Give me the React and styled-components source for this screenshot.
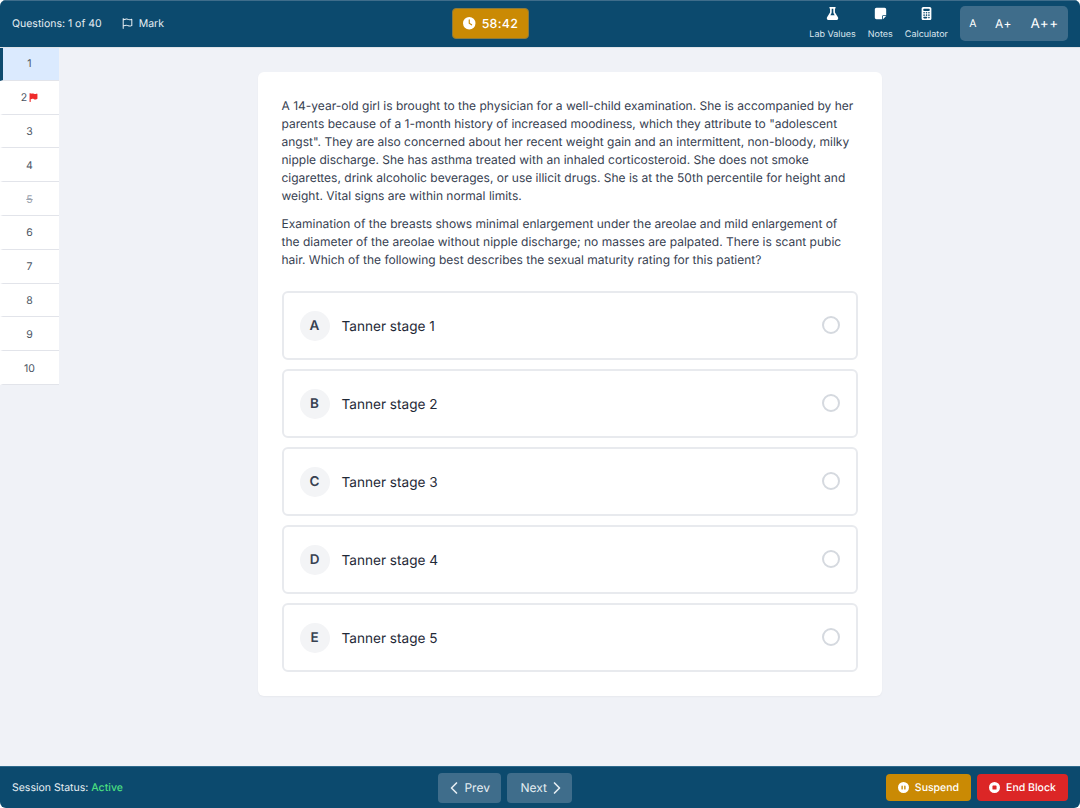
import React from "react";
import styled, { createGlobalStyle } from "styled-components";
import { FaFlask, FaNoteSticky, FaCalculator, FaClock, FaCirclePause, FaCircleStop, FaFlag, FaRegFlag } from "react-icons/fa6";
import { ChevronLeft, ChevronRight } from "lucide-react";

const Global = createGlobalStyle`
  html, body { margin: 0; padding: 0; background: #fff; }
  * { box-sizing: border-box; }
  body { font-family: Inter, "Liberation Sans", sans-serif; text-rendering: geometricPrecision; }
`;
const Shell = styled.div`
  width: 1080px; height: 808px; display: flex; flex-direction: column;
  background: #f0f2f7; border-radius: 6px; overflow: hidden;
`;
const Header = styled.header`
  height: 47px; flex: none; background: #0c4a6e; color: #fff; position: relative; z-index: 1;
  border-top: 1px solid #3f6d8b; box-shadow: 0 1px 0 #dfe3e8;
  display: flex; justify-content: space-between; align-items: center; padding: 0 12px 1px;
`;
const HeaderLeft = styled.div`display: flex; align-items: center; gap: 20px; font-size: 10.5px; color: #e5edf2;`;
const MarkLink = styled.div`display: flex; align-items: center; gap: 6px; padding-right: 8px;
  svg { width: 11px; height: 11px; }`;
const Timer = styled.div`
  height: 31px; width: 77px; background: #ca8a04; border: 1px solid #8a7a3f; border-radius: 4px;
  display: flex; align-items: center; justify-content: center; gap: 6px;
  font-size: 12.4px; font-weight: 500; letter-spacing: .3px; color: #fff;
  svg { width: 12.5px; height: 12.5px; }
`;
const HeaderRight = styled.div`display: flex; align-items: center; gap: 12px;`;
const Tool = styled.div`
  display: flex; flex-direction: column; align-items: center; gap: 9px; font-size: 9px; color: #dbe6ee;
  svg { width: 13px; height: 13px; color: #fff; }
`;
const SizeGroup = styled.div`
  display: flex; align-items: center; height: 35px; background: #3f6d8b; border-radius: 5px; color: #fff;
`;
const SizeBtn = styled.div`
  width: ${p => p.$w}px; height: 100%; display: flex; align-items: center; justify-content: center;
  font-size: ${p => p.$fs}px; position: relative; letter-spacing: .5px;
  & + &::before { content: ""; position: absolute; left: 0; top: 3px; bottom: 3px; width: 1px; background: #5b84a0; }
`;
const Body = styled.div`flex: 1; display: flex; min-height: 0;`;
const Sidebar = styled.nav`width: 59px; flex: none; display: flex; flex-direction: column;`;
const NavItem = styled.div`
  height: 33.8px; display: flex; align-items: center; justify-content: center; gap: 2px;
  font-size: 10.5px; background: ${p => p.$active ? "#dbeafe" : "#fff"};
  color: ${p => p.$struck ? "#9ca3af" : "#4b5563"};
  text-decoration: ${p => p.$struck ? "line-through" : "none"};
  border-bottom: 1px solid #e2e4ea;
  border-left: 3px solid ${p => p.$active ? "#0c4a6e" : "transparent"};
  padding: 1px 3px 0 0;
  svg { width: 9px; height: 9px; color: #ef2b2b; }
`;
const Main = styled.main`flex: 1; display: flex; justify-content: center; align-items: flex-start; padding-top: 25px;`;
const Card = styled.section`
  width: 624px; height: 624px; background: #fff; border-radius: 6px; padding: 24.5px 24px 24px;
  box-shadow: 0 1px 2px rgba(0,0,0,.04);
`;
const Para = styled.p`margin: 0 0 10.75px; font-size: 12px; line-height: 18px; color: #374151;`;
const Options = styled.div`display: flex; flex-direction: column; gap: 9px; margin-top: 22px;`;
const Option = styled.div`
  height: 69px; border: 2px solid #e8eaee; border-radius: 6px; background: #fff;
  display: flex; align-items: center; padding: 0 16px;
`;
const Letter = styled.div`
  width: 30px; height: 30px; border-radius: 50%; background: #f3f4f6; color: #374151;
  display: flex; align-items: center; justify-content: center; font-size: 13.5px; font-weight: 600;
`;
const OptionText = styled.div`flex: 1; margin-left: 12px; padding-top: 2px; font-size: 13.6px; color: #1f2937;`;
const Radio = styled.div`width: 18px; height: 18px; margin-top: -1px; border-radius: 50%; border: 2px solid #d5d9df;`;
const Footer = styled.footer`
  height: 42px; flex: none; background: #0c4a6e; border-top: 1px solid #2f6a8c;
  display: flex; justify-content: space-between; align-items: center; padding: 0 12px;
`;
const Status = styled.div`font-size: 10.5px; color: #e5edf2; span { color: #4ade80; font-weight: 500; }`;
const Nav = styled.div`display: flex; gap: 6px; margin-left: 2px;`;
const NavBtn = styled.div`
  height: 30px; width: ${p => p.$w}px; background: #3f6d8b; border-radius: 4px; color: #e5edf2;
  display: flex; align-items: center; padding-left: ${p => p.$pl}px; font-size: 12px;
  svg { width: 20px; height: 20px; flex: none; }
`;
const Actions = styled.div`display: flex; gap: 6px;`;
const ActionBtn = styled.div`
  height: 27.75px; width: ${p => p.$w}px; border-radius: 4px; background: ${p => p.$bg}; color: #fff;
  display: flex; align-items: center; justify-content: center; gap: 6px; font-size: 10.5px; font-weight: 500;
  svg { width: 11px; height: 11px; }
`;

const nav = [1,2,3,4,5,6,7,8,9,10];
const opts = ["A","B","C","D","E"];

export default function App() {
  return (
    <>
      <Global />
      <Shell>
        <Header>
          <HeaderLeft>
            <span>Questions: 1 of 40</span>
            <MarkLink><FaRegFlag /> Mark</MarkLink>
          </HeaderLeft>
          <Timer><FaClock /> 58:42</Timer>
          <HeaderRight>
            <Tool><FaFlask />Lab Values</Tool>
            <Tool><FaNoteSticky />Notes</Tool>
            <Tool><FaCalculator />Calculator</Tool>
            <SizeGroup>
              <SizeBtn $w={26} $fs={10.5}>A</SizeBtn>
              <SizeBtn $w={35} $fs={12}>A+</SizeBtn>
              <SizeBtn $w={47} $fs={13.5}>A++</SizeBtn>
            </SizeGroup>
          </HeaderRight>
        </Header>
        <Body>
          <Sidebar>
            {nav.map(n => (
              <NavItem key={n} $active={n === 1} $struck={n === 5}>
                {n}{n === 2 && <FaFlag />}
              </NavItem>
            ))}
          </Sidebar>
          <Main>
            <Card>
              <Para>A 14-year-old girl is brought to the physician for a well-child examination. She is accompanied by her parents because of a 1-month history of increased moodiness, which they attribute to "adolescent angst". They are also concerned about her recent weight gain and an intermittent, non-bloody, milky nipple discharge. She has asthma treated with an inhaled corticosteroid. She does not smoke cigarettes, drink alcoholic beverages, or use illicit drugs. She is at the 50th percentile for height and weight. Vital signs are within normal limits.</Para>
              <Para>Examination of the breasts shows minimal enlargement under the areolae and mild enlargement of the diameter of the areolae without nipple discharge; no masses are palpated. There is scant pubic hair. Which of the following best describes the sexual maturity rating for this patient?</Para>
              <Options>
                {opts.map((l, i) => (
                  <Option key={l}>
                    <Letter>{l}</Letter>
                    <OptionText>Tanner stage {i + 1}</OptionText>
                    <Radio />
                  </Option>
                ))}
              </Options>
            </Card>
          </Main>
        </Body>
        <Footer>
          <Status>Session Status: <span>Active</span></Status>
          <Nav>
            <NavBtn $w={63} $pl={6}><ChevronLeft />Prev</NavBtn>
            <NavBtn $w={65} $pl={13}>Next<ChevronRight /></NavBtn>
          </Nav>
          <Actions>
            <ActionBtn $w={85} $bg="#ca8a04"><FaCirclePause />Suspend</ActionBtn>
            <ActionBtn $w={91} $bg="#dc2626"><FaCircleStop />End Block</ActionBtn>
          </Actions>
        </Footer>
      </Shell>
    </>
  );
}
